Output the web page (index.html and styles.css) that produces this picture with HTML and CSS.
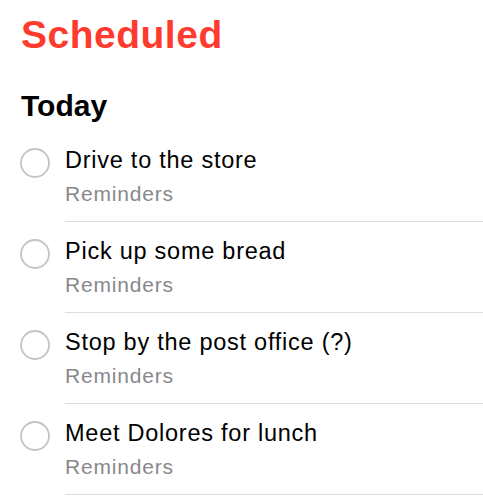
FILE: index.html
```html
<!DOCTYPE html>
<html lang="en">
<head>
    <meta charset="UTF-8">
    <meta name="viewport" content="width=device-width, initial-scale=1.0">
    <title>Scheduled</title>
    <link rel="stylesheet" href="styles.css">
</head>
<body>
    <h1 class="list-title">Scheduled</h1>

    <h2 class="day">Today</h2>

    <ul class="reminders">
        <li class="reminder">
            <svg class="check" viewBox="0 0 30 30"><circle cx="15" cy="15" r="14"/></svg>
            <div class="reminder-body">
                <div class="reminder-name">Drive to the store</div>
                <div class="reminder-list">Reminders</div>
            </div>
        </li>
        <li class="reminder">
            <svg class="check" viewBox="0 0 30 30"><circle cx="15" cy="15" r="14"/></svg>
            <div class="reminder-body">
                <div class="reminder-name">Pick up some bread</div>
                <div class="reminder-list">Reminders</div>
            </div>
        </li>
        <li class="reminder">
            <svg class="check" viewBox="0 0 30 30"><circle cx="15" cy="15" r="14"/></svg>
            <div class="reminder-body">
                <div class="reminder-name">Stop by the post office (?)</div>
                <div class="reminder-list">Reminders</div>
            </div>
        </li>
        <li class="reminder">
            <svg class="check" viewBox="0 0 30 30"><circle cx="15" cy="15" r="14"/></svg>
            <div class="reminder-body">
                <div class="reminder-name">Meet Dolores for lunch</div>
                <div class="reminder-list">Reminders</div>
            </div>
        </li>
    </ul>
</body>
</html>
```

FILE: styles.css
```css
body {
    font-family: "Liberation Sans", Arial, sans-serif;
    margin: 0;
    padding-top: 12px;
    background-color: #fff;
    color: #000;
}
.list-title {
    margin: 0;
    padding-left: 21px;
    font-size: 39px;
    line-height: 46px;
    font-weight: bold;
    letter-spacing: 0.5px;
    color: #ff3b30;
}
.day {
    margin: 30px 0 0;
    padding-left: 21px;
    font-size: 30px;
    line-height: 36px;
    font-weight: bold;
}
.reminders {
    list-style: none;
    margin: 7px 0 0;
    padding: 0;
}
.reminder {
    display: flex;
    align-items: flex-start;
    padding-left: 20px;
}
.check {
    width: 30px;
    height: 30px;
    flex-shrink: 0;
    margin-top: 17px;
    margin-right: 15px;
}
.check circle {
    fill: none;
    stroke: #c4c4c6;
    stroke-width: 1.8;
}
.reminder-body {
    flex: 1;
    padding: 15px 0 7px;
    border-bottom: 1px solid #dddddf;
}
.reminder-name {
    font-size: 23.5px;
    line-height: 28px;
    letter-spacing: 0.75px;
}
.reminder-list {
    font-size: 21px;
    line-height: 40px;
    letter-spacing: 0.8px;
    color: #88888c;
}
```
